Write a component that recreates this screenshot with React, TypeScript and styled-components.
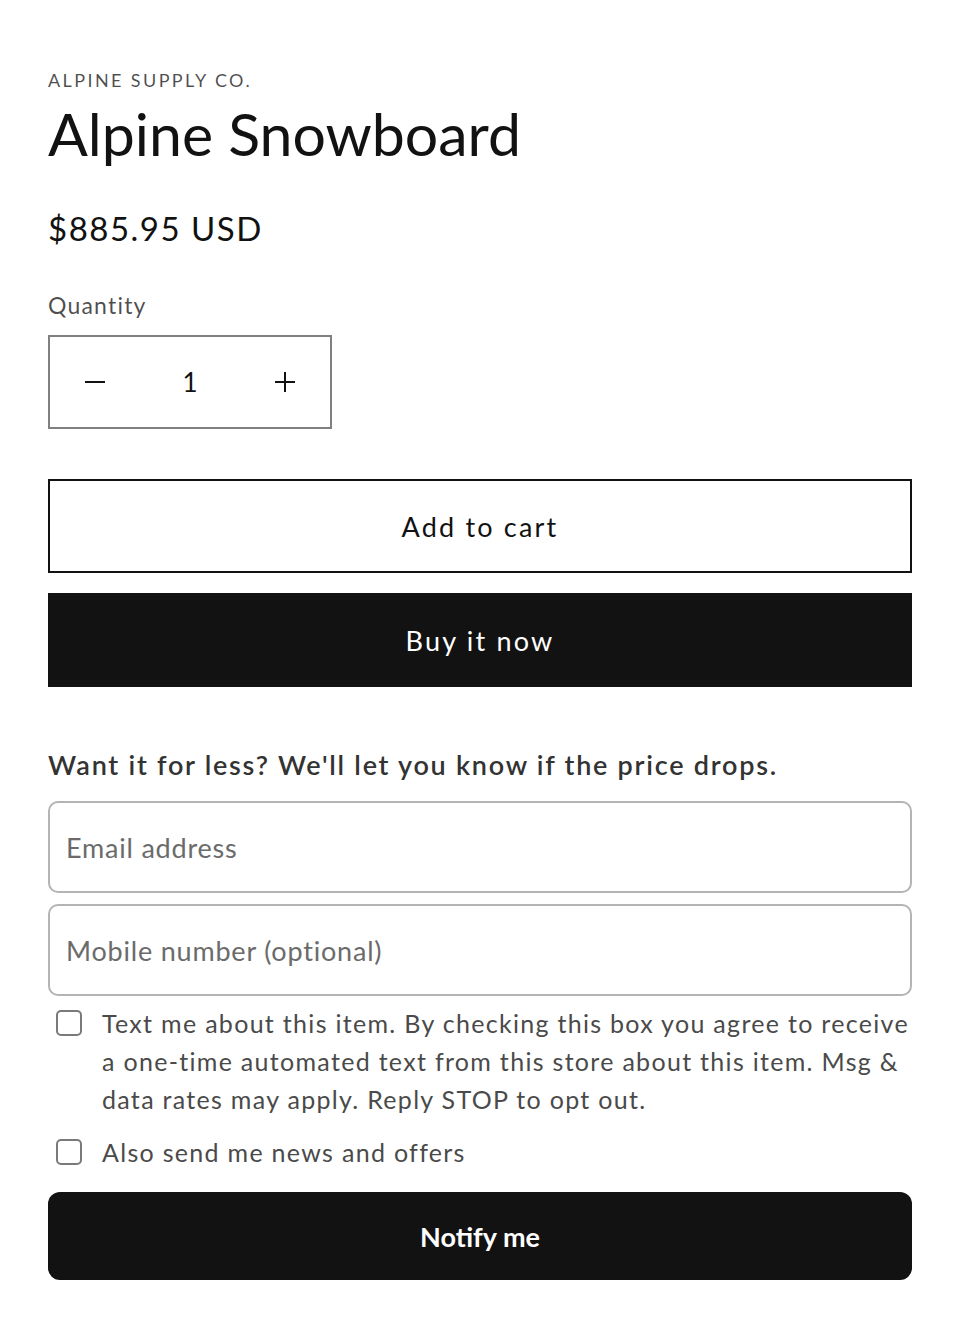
import styled, { createGlobalStyle } from 'styled-components'

const GlobalStyle = createGlobalStyle`
  html, body {
    margin: 0;
    padding: 0;
    background: #ffffff;
  }
  body {
    font-family: Lato, "Noto Sans", sans-serif;
    color: #121212;
  }
  * {
    box-sizing: border-box;
  }
`

const Page = styled.div`
  width: 960px;
  padding: 68px 48px 40px;
  display: flex;
  flex-direction: column;
`

const Vendor = styled.p`
  margin: 0;
  font-size: 18px;
  letter-spacing: 2.4px;
  color: rgba(18, 18, 18, 0.75);
  line-height: 24px;
`

const Title = styled.h1`
  margin: 6px 0 0;
  font-size: 59px;
  font-weight: 400;
  line-height: 72px;
  letter-spacing: 0;
`

const Price = styled.div`
  margin-top: 36px;
  font-size: 33px;
  letter-spacing: 1.5px;
  line-height: 44px;
`

const FieldLabel = styled.div`
  margin-top: 40px;
  font-size: 23px;
  letter-spacing: 1.2px;
  color: rgba(18, 18, 18, 0.75);
  line-height: 30px;
`

const QuantityBox = styled.div`
  margin-top: 15px;
  width: 284px;
  height: 94px;
  border: 2px solid #808080;
  display: grid;
  grid-template-columns: 90px 1fr 90px;
  align-items: center;
  justify-items: center;
`

const QtyButton = styled.button`
  border: none;
  background: none;
  padding: 0;
  width: 100%;
  height: 100%;
  display: flex;
  align-items: center;
  justify-content: center;
  color: #121212;
`

const QtyValue = styled.span`
  font-size: 26px;
  color: #121212;
`

const Actions = styled.div`
  margin-top: 50px;
  display: flex;
  flex-direction: column;
  gap: 20px;
`

const ProductButton = styled.button<{ $filled?: boolean }>`
  height: 94px;
  width: 100%;
  font-family: inherit;
  font-size: 27px;
  letter-spacing: 2.2px;
  border: ${(p) => (p.$filled ? 'none' : '2px solid #121212')};
  background: ${(p) => (p.$filled ? '#121212' : '#ffffff')};
  color: ${(p) => (p.$filled ? '#ffffff' : '#121212')};
  padding: 0;
`

const NotifySection = styled.section`
  margin-top: 60px;
  display: flex;
  flex-direction: column;
`

const NotifyHeading = styled.h2`
  margin: 0;
  font-size: 27px;
  font-weight: 600;
  letter-spacing: 1.75px;
  color: #333333;
  line-height: 36px;
`

const InputStack = styled.div`
  margin-top: 18px;
  display: flex;
  flex-direction: column;
  gap: 11px;
`

const TextInput = styled.input`
  height: 92px;
  width: 100%;
  border: 2px solid #b4b4b4;
  border-radius: 10px;
  padding: 0 16px;
  font-family: inherit;
  font-size: 27px;
  letter-spacing: 0.8px;
  color: #121212;
  background: #fff;
  &::placeholder {
    color: #6b6b6b;
  }
`

const CheckRow = styled.label<{ $gap?: number }>`
  display: flex;
  align-items: flex-start;
  gap: 20px;
  padding-left: 8px;
  margin-top: ${(p) => p.$gap ?? 0}px;
  font-size: 25px;
  letter-spacing: 1.3px;
  line-height: 38px;
  color: #4a4a4a;
`

const Box = styled.span`
  flex: 0 0 auto;
  width: 26px;
  height: 26px;
  margin-top: 6px;
  border: 2px solid #7a7a7a;
  border-radius: 5px;
`

const NotifyButton = styled.button`
  margin-top: 21px;
  height: 88px;
  width: 100%;
  border: none;
  border-radius: 12px;
  background: #121212;
  color: #ffffff;
  font-family: inherit;
  font-size: 27px;
  font-weight: 700;
`

export default function App() {
  return (
    <>
      <GlobalStyle />
      <Page>
        <Vendor>ALPINE SUPPLY CO.</Vendor>
        <Title>Alpine Snowboard</Title>
        <Price>$885.95 USD</Price>

        <FieldLabel>Quantity</FieldLabel>
        <QuantityBox>
          <QtyButton aria-label="Decrease quantity">
            <svg width="20" height="20" viewBox="0 0 20 20">
              <path d="M0 10h20" stroke="#121212" strokeWidth="2" />
            </svg>
          </QtyButton>
          <QtyValue>1</QtyValue>
          <QtyButton aria-label="Increase quantity">
            <svg width="20" height="20" viewBox="0 0 20 20">
              <path d="M0 10h20M10 0v20" stroke="#121212" strokeWidth="2" />
            </svg>
          </QtyButton>
        </QuantityBox>

        <Actions>
          <ProductButton>Add to cart</ProductButton>
          <ProductButton $filled>Buy it now</ProductButton>
        </Actions>

        <NotifySection>
          <NotifyHeading>Want it for less? We'll let you know if the price drops.</NotifyHeading>
          <InputStack>
            <TextInput placeholder="Email address" />
            <TextInput placeholder="Mobile number (optional)" />
          </InputStack>
          <CheckRow $gap={8}>
            <Box />
            <span>
              Text me about this item. By checking this box you agree to receive a one-time
              automated text from this store about this item. Msg &amp; data rates may apply.
              Reply STOP to opt out.
            </span>
          </CheckRow>
          <CheckRow $gap={15}>
            <Box />
            <span>Also send me news and offers</span>
          </CheckRow>
          <NotifyButton>Notify me</NotifyButton>
        </NotifySection>
      </Page>
    </>
  )
}
